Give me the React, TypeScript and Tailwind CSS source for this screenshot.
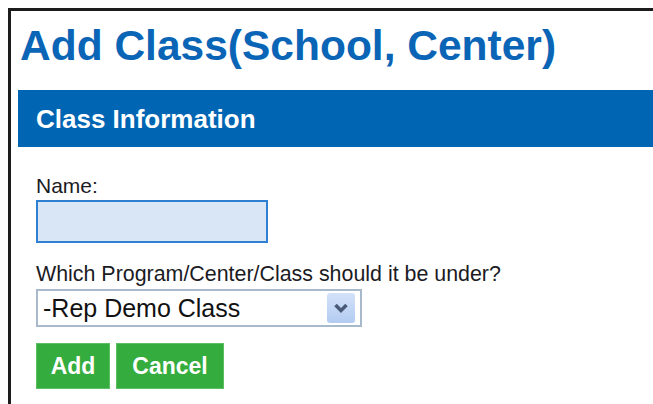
export default function App() {
  return (
    <div className="h-[404px] w-[653px] overflow-hidden bg-white pl-2 pt-2 font-['Liberation_Sans',Arial,sans-serif]">
      <div className="h-full border-l-[3px] border-t-[3px] border-[#1c1c1c]">
        <h1 className="pl-[9px] pt-[11px] text-[42.5px] font-bold leading-[48px] text-[#0a65b6]">
          Add Class(School, Center)
        </h1>

        <div className="ml-[7px] mt-[20px] flex h-[57px] items-center bg-[#0066b4] pl-[18px]">
          <h2 className="text-[26px] font-bold leading-[30px] text-white">
            Class Information
          </h2>
        </div>

        <form className="pl-[25px]" onSubmit={(e) => e.preventDefault()}>
          <label className="mt-[27px] block text-[21px] leading-[24px] text-[#1b1b24]">
            Name:
          </label>
          <input
            type="text"
            className="mt-[2px] block h-[43px] w-[232px] border-2 border-[#2f80d3] bg-[#d8e6f6] outline-none"
          />

          <label className="mt-[19px] block text-[21.4px] leading-[24px] text-[#1b1b24]">
            Which Program/Center/Class should it be under?
          </label>
          <div className="mt-[3px] flex h-[38px] w-[326px] items-center justify-between border-2 border-[#a8b9cc] bg-white pl-[5px] pr-[5px]">
            <span className="text-[25px] leading-[30px] text-[#111]">
              -Rep Demo Class
            </span>
            <span className="flex h-[30px] w-[28px] items-center justify-center rounded-[3px] bg-gradient-to-b from-[#d3e2f9] to-[#b3cbf2]">
              <svg width="14" height="10" viewBox="0 0 14 10">
                <path
                  d="M1.5 2 L7 7.5 L12.5 2"
                  fill="none"
                  stroke="#4a5a76"
                  strokeWidth="3.5"
                />
              </svg>
            </span>
          </div>

          <div className="mt-[16px] flex gap-[6px]">
            <button
              type="submit"
              className="h-[46px] w-[74px] border border-[#5cbf62] bg-[#35ad3e] text-[23px] font-bold text-white"
            >
              Add
            </button>
            <button
              type="button"
              className="h-[46px] w-[108px] border border-[#5cbf62] bg-[#35ad3e] text-[23px] font-bold text-white"
            >
              Cancel
            </button>
          </div>
        </form>
      </div>
    </div>
  );
}
